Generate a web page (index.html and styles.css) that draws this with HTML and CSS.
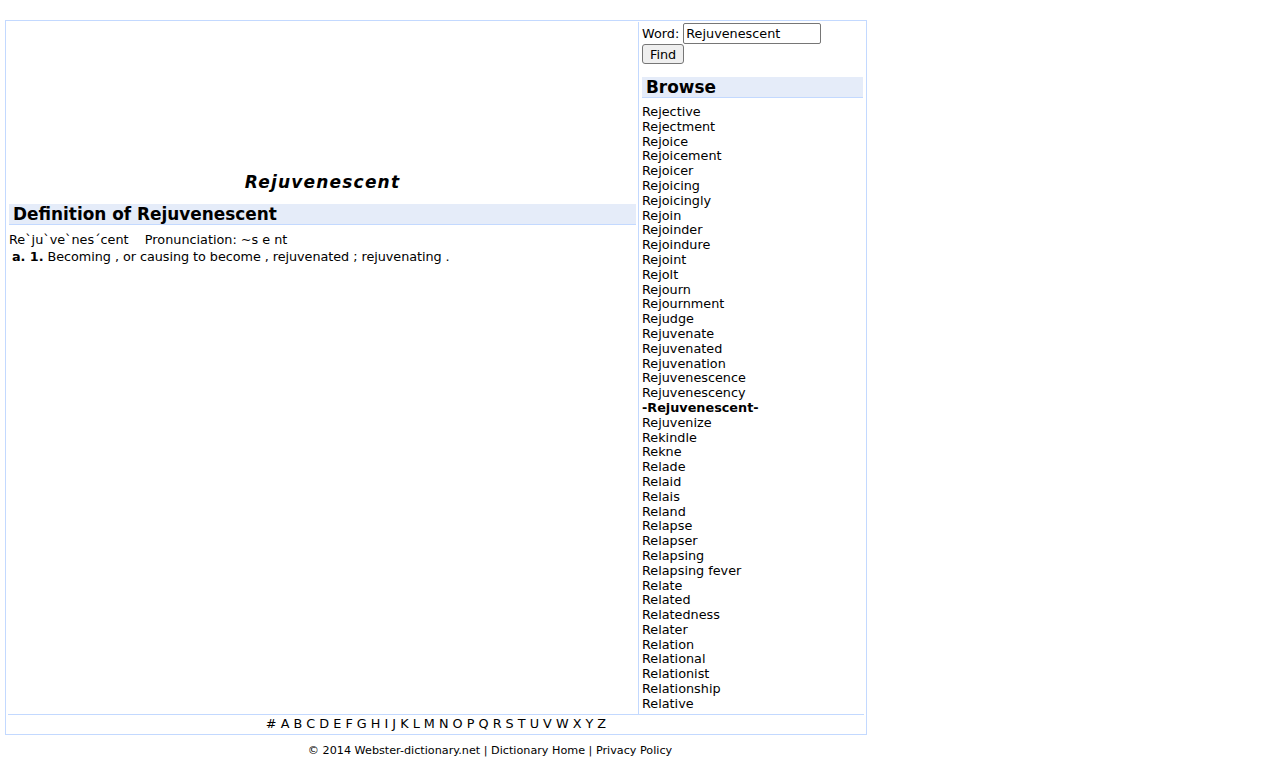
FILE: index.html
```html
<!DOCTYPE html>
<html>
<head>
<meta charset="utf-8">
<link rel="stylesheet" href="styles.css">
</head>
<body>
<div class="page">
  <div class="frame">
    <div class="main">
      <div class="left">
        <div class="ad"></div>
        <h1 class="title">Rejuvenescent</h1>
        <h2 class="head">Definition of Rejuvenescent</h2>
        <div class="def">
          <div>Re`ju`ve`nes´cent&nbsp;&nbsp;&nbsp;&nbsp;Pronunciation: ~s e nt</div>
          <div class="sense">&nbsp;<b>a. 1.</b> Becoming , or causing to become , rejuvenated ; rejuvenating .</div>
        </div>
      </div>
      <div class="right">
        <form class="search">
          <label>Word: <input class="word" type="text" value="Rejuvenescent"></label>
          <button class="find" type="button">Find</button>
        </form>
        <h2 class="head browse">Browse</h2>
        <ul class="list">
          <li>Rejective</li>
          <li>Rejectment</li>
          <li>Rejoice</li>
          <li>Rejoicement</li>
          <li>Rejoicer</li>
          <li>Rejoicing</li>
          <li>Rejoicingly</li>
          <li>Rejoin</li>
          <li>Rejoinder</li>
          <li>Rejoindure</li>
          <li>Rejoint</li>
          <li>Rejolt</li>
          <li>Rejourn</li>
          <li>Rejournment</li>
          <li>Rejudge</li>
          <li>Rejuvenate</li>
          <li>Rejuvenated</li>
          <li>Rejuvenation</li>
          <li>Rejuvenescence</li>
          <li>Rejuvenescency</li>
          <li class="cur">-Rejuvenescent-</li>
          <li>Rejuvenize</li>
          <li>Rekindle</li>
          <li>Rekne</li>
          <li>Relade</li>
          <li>Relaid</li>
          <li>Relais</li>
          <li>Reland</li>
          <li>Relapse</li>
          <li>Relapser</li>
          <li>Relapsing</li>
          <li>Relapsing fever</li>
          <li>Relate</li>
          <li>Related</li>
          <li>Relatedness</li>
          <li>Relater</li>
          <li>Relation</li>
          <li>Relational</li>
          <li>Relationist</li>
          <li>Relationship</li>
          <li>Relative</li>
        </ul>
      </div>
    </div>
    <div class="letters"># A B C D E F G H I J K L M N O P Q R S T U V W X Y Z</div>
  </div>
  <div class="footer">© 2014 Webster-dictionary.net | Dictionary Home | Privacy Policy</div>
</div>
</body>
</html>
```
FILE: styles.css
```css
html, body {
  margin: 0;
  padding: 0;
  background: #fff;
}
body {
  font-family: "DejaVu Sans", sans-serif;
  font-size: 12.8px;
  color: #000;
}
.page {
  padding: 20px 0 0 5px;
  width: 862px;
}
.frame {
  border: 1px solid #c3d9ff;
  padding: 1px 2px 0 2px;
}
.main {
  display: flex;
}
.left {
  width: 627px;
  padding: 0 2px 0 1px;
}
.ad {
  height: 149px;
}
.title {
  font-size: 17px;
  font-style: italic;
  font-weight: bold;
  letter-spacing: 1.2px;
  text-align: center;
  margin: 0;
  height: 22px;
  line-height: 22px;
}
.head {
  background: #e5ecf9;
  border-bottom: 1px solid #c3d9ff;
  font-size: 16.9px;
  font-weight: bold;
  margin: 0;
  padding: 0 4px;
  height: 20px;
  line-height: 20px;
  margin-top: 11px;
}
.def {
  margin-top: 6px;
  line-height: 17px;
}
.sense {
  margin-left: -1px;
  letter-spacing: -0.05px;
}
.right {
  border-left: 1px solid #c3d9ff;
  padding: 1px 0 2px 3px;
  width: 221px;
}
.search {
  margin: 0;
}
.word {
  font-family: "DejaVu Sans", sans-serif;
  font-size: 12.8px;
  width: 138px;
  height: 21px;
  box-sizing: border-box;
  border: 1px solid #767676;
  border-radius: 2px;
  padding: 1px 2px;
  margin: 0;
}
.find {
  display: block;
  font-family: "DejaVu Sans", sans-serif;
  font-size: 12.8px;
  margin: 0;
  height: 20px;
  padding: 0 7px;
  border: 1px solid #767676;
  border-radius: 3px;
  background: #efefef;
}
.browse {
  margin-top: 13px;
}
.list {
  list-style: none;
  margin: 7px 0 0 0;
  padding: 0;
}
.list li {
  line-height: 14.8px;
}
.list .cur {
  font-weight: bold;
}
.letters {
  border-top: 1px solid #c3d9ff;
  text-align: center;
  height: 19px;
  line-height: 17px;
}
.footer {
  text-align: center;
  font-size: 11.2px;
  padding: 9px 0 0 108px;
}
```
